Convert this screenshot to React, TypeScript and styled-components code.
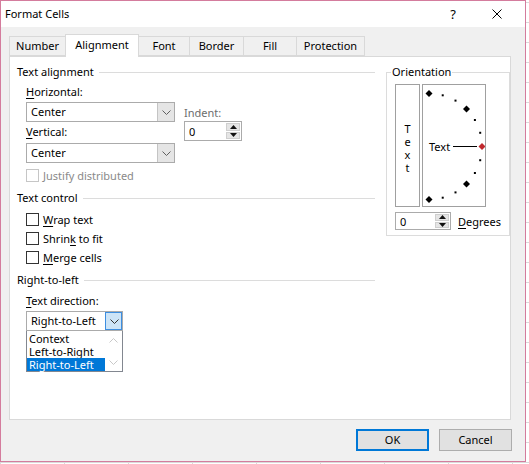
import React from "react";
import styled, { createGlobalStyle } from "styled-components";

const Global = createGlobalStyle`
  html, body { margin: 0; padding: 0; }
  body {
    width: 529px;
    height: 464px;
    overflow: hidden;
    background-color: #ffffff;
    background-image:
      linear-gradient(#dadada 1px, transparent 1px),
      linear-gradient(90deg, #dadada 1px, transparent 1px);
    background-size: 64px 20px;
    background-position: 0 2px, 0 0;
    font-family: "Noto Sans", "Open Sans", sans-serif;
    font-size: 11px;
    color: #000;
  }
  * { box-sizing: border-box; }
`;

const Dialog = styled.div`
  width: 526px;
  height: 462px;
  border: 1px solid #d47c9d;
  background: #f0f0f0;
  display: flex;
  flex-direction: column;
`;

const TitleBar = styled.div`
  height: 26px;
  background: #ffffff;
  display: flex;
  align-items: center;
  padding-left: 4px;
  padding-right: 6px;
`;

const Title = styled.div`
  flex: 1;
  font-size: 11px;
  line-height: 16px;
`;

const TitleButton = styled.div`
  width: 44px;
  height: 26px;
  display: flex;
  align-items: center;
  justify-content: center;
  font-size: 13px;
`;

const TabRow = styled.div`
  margin-top: 7px;
  height: 22px;
  display: flex;
  align-items: flex-end;
  padding-left: 9px;
  position: relative;
  z-index: 1;
`;

const Tab = styled.div<{ $w: number; $active?: boolean }>`
  width: ${(p) => p.$w}px;
  height: ${(p) => (p.$active ? 23 : 20)}px;
  margin-left: -1px;
  margin-bottom: ${(p) => (p.$active ? -1 : 0)}px;
  border: 1px solid #d9d9d9;
  border-bottom: ${(p) => (p.$active ? "none" : "1px solid #d9d9d9")};
  background: ${(p) => (p.$active ? "#ffffff" : "#f0f0f0")};
  display: flex;
  align-items: center;
  justify-content: center;
  padding-bottom: ${(p) => (p.$active ? 3 : 0)}px;
  line-height: 16px;
  position: relative;
  z-index: ${(p) => (p.$active ? 2 : 1)};
`;

const Panel = styled.div`
  margin-left: 8px;
  width: 502px;
  height: 364px;
  background: #ffffff;
  border: 1px solid #d9d9d9;
  padding: 7px 0 0 7px;
  display: flex;
  gap: 11px;
`;

const LeftCol = styled.div`
  width: 361px;
  display: flex;
  flex-direction: column;
`;

const GroupHeader = styled.div<{ $mt?: number }>`
  display: flex;
  align-items: center;
  gap: 5px;
  height: 16px;
  line-height: 16px;
  margin-top: ${(p) => p.$mt ?? 0}px;
  &::after {
    content: "";
    flex: 1;
    border-top: 1px solid #dcdcdc;
  }
`;

const Indented = styled.div`
  padding-left: 9px;
  display: flex;
  flex-direction: column;
`;

const AlignRow = styled.div`
  display: flex;
  gap: 9px;
`;

const Stack = styled.div<{ $pt?: number }>`
  display: flex;
  flex-direction: column;
  padding-top: ${(p) => p.$pt ?? 0}px;
`;

const Label = styled.div<{ $mt?: number; $disabled?: boolean }>`
  height: 16px;
  line-height: 16px;
  margin-top: ${(p) => p.$mt ?? 0}px;
  color: ${(p) => (p.$disabled ? "#6d6d6d" : "#000")};
  white-space: nowrap;
`;

const Key = styled.span`
  text-decoration: underline;
  text-underline-offset: 2px;
`;

const Combo = styled.div<{ $w: number; $mt?: number }>`
  width: ${(p) => p.$w}px;
  height: 20px;
  margin-top: ${(p) => p.$mt ?? 0}px;
  border: 1px solid #ababab;
  background: #ffffff;
  display: flex;
`;

const ComboValue = styled.div`
  flex: 1;
  padding-left: 4px;
  line-height: 18px;
  white-space: nowrap;
`;

const ComboButton = styled.div<{ $active?: boolean }>`
  width: 17px;
  background: ${(p) => (p.$active ? "#cce4f7" : "#e5e5e5")};
  border-left: 1px solid ${(p) => (p.$active ? "#3d8ee0" : "#c4c4c4")};
  ${(p) => (p.$active ? "outline: 1px solid #3d8ee0; outline-offset: -1px;" : "")}
  display: flex;
  align-items: center;
  justify-content: center;
`;

const Spinner = styled.div<{ $w: number; $h: number }>`
  width: ${(p) => p.$w}px;
  height: ${(p) => p.$h}px;
  border: 1px solid #ababab;
  background: #fff;
  display: flex;
`;

const SpinValue = styled.div`
  flex: 1;
  padding-left: 4px;
  display: flex;
  align-items: center;
`;

const SpinButtons = styled.div`
  width: 16px;
  padding: 1px;
  display: flex;
  flex-direction: column;
  gap: 1px;
`;

const SpinHalf = styled.div`
  flex: 1;
  background: #e5e5e5;
  border: 1px solid #cfcfcf;
  display: flex;
  align-items: center;
  justify-content: center;
`;

const CheckRow = styled.div<{ $mt?: number; $disabled?: boolean }>`
  display: flex;
  align-items: center;
  gap: 4px;
  height: 16px;
  margin-top: ${(p) => p.$mt ?? 0}px;
  color: ${(p) => (p.$disabled ? "#8a8a8a" : "#000")};
`;

const CheckBox = styled.div<{ $disabled?: boolean }>`
  width: 13px;
  height: 13px;
  border: 1px solid ${(p) => (p.$disabled ? "#c6c6c6" : "#333333")};
  background: #fff;
`;

const DropList = styled.div`
  width: 97px;
  height: 41px;
  border: 1px solid #828790;
  border-top: none;
  background: #fff;
  display: flex;
`;

const DropItems = styled.div`
  flex: 1;
  display: flex;
  flex-direction: column;
  padding-top: 1px;
`;

const DropItem = styled.div<{ $selected?: boolean }>`
  height: 13px;
  line-height: 13px;
  padding-left: 2px;
  white-space: nowrap;
  background: ${(p) => (p.$selected ? "#0078d7" : "transparent")};
  color: ${(p) => (p.$selected ? "#fff" : "#000")};
`;

const DropScroll = styled.div`
  width: 17px;
  display: flex;
  flex-direction: column;
  align-items: center;
  justify-content: space-between;
  padding: 7px 0 6px;
`;

const OrientSet = styled.fieldset`
  margin: 0;
  width: 111px;
  height: 172px;
  border: 1px solid #dcdcdc;
  padding: 4px 8px 0 8px;
  display: flex;
  flex-direction: column;
`;

const Legend = styled.legend`
  margin-left: -4px;
  padding: 0 1px;
  line-height: 16px;
  font-size: 11px;
`;

const OrientBoxes = styled.div`
  display: flex;
  gap: 2px;
`;

const VerticalBox = styled.div`
  width: 25px;
  height: 123px;
  border: 1px solid #a0a0a0;
  display: flex;
  flex-direction: column;
  align-items: center;
  justify-content: center;
  padding-top: 4px;
`;

const VLetter = styled.span`
  line-height: 13px;
  height: 13px;
`;

const DialBox = styled.div`
  width: 64px;
  height: 123px;
  border: 1px solid #a0a0a0;
`;

const DegreeRow = styled.div`
  margin-top: 5px;
  display: flex;
  align-items: center;
  gap: 7px;
`;

const Footer = styled.div`
  margin-top: 9px;
  display: flex;
  justify-content: flex-end;
  gap: 10px;
  padding-right: 13px;
`;

const Button = styled.div<{ $primary?: boolean }>`
  width: 73px;
  height: 22px;
  background: #e1e1e1;
  border: ${(p) => (p.$primary ? "2px solid #0078d7" : "1px solid #adadad")};
  display: flex;
  align-items: center;
  justify-content: center;
  line-height: 16px;
`;

const Chevron = ({ color = "#606060" }: { color?: string }) => (
  <svg width="9" height="5" viewBox="0 0 9 5">
    <path d="M0.5 0.5 L4.5 4.5 L8.5 0.5" fill="none" stroke={color} strokeWidth="1" />
  </svg>
);

const ChevronUp = ({ color = "#c8c8c8" }: { color?: string }) => (
  <svg width="9" height="5" viewBox="0 0 9 5">
    <path d="M0.5 4.5 L4.5 0.5 L8.5 4.5" fill="none" stroke={color} strokeWidth="1" />
  </svg>
);

const Tri = ({ up }: { up?: boolean }) => (
  <svg width="7" height="4" viewBox="0 0 7 4">
    <path d={up ? "M3.5 0 L7 4 L0 4 Z" : "M0 0 L7 0 L3.5 4 Z"} fill="#111" />
  </svg>
);

const SpinControl = ({ w, h }: { w: number; h: number }) => (
  <Spinner $w={w} $h={h}>
    <SpinValue>0</SpinValue>
    <SpinButtons>
      <SpinHalf>
        <Tri up />
      </SpinHalf>
      <SpinHalf>
        <Tri />
      </SpinHalf>
    </SpinButtons>
  </Spinner>
);

const Dial = () => {
  const cx = 6;
  const cy = 61.5;
  const r = 53;
  const marks: React.ReactNode[] = [];
  for (let a = -90; a <= 90; a += 15) {
    const rad = (a * Math.PI) / 180;
    const x = cx + r * Math.cos(rad);
    const y = cy - r * Math.sin(rad);
    if (a % 45 === 0) {
      const s = 3.5;
      marks.push(
        <path
          key={a}
          d={`M${x} ${y - s} L${x + s} ${y} L${x} ${y + s} L${x - s} ${y} Z`}
          fill={a === 0 ? "#c0282d" : "#000"}
        />
      );
    } else {
      marks.push(<rect key={a} x={x - 1} y={y - 1} width="2" height="2" fill="#000" />);
    }
  }
  return (
    <svg width="62" height="121" viewBox="0 0 62 121">
      {marks}
      <text x="6" y="65.5" fontFamily="Noto Sans, sans-serif" fontSize="11" fill="#000">
        Text
      </text>
      <line x1="30" y1="61.5" x2="54" y2="61.5" stroke="#000" strokeWidth="1" />
    </svg>
  );
};

export default function App() {
  return (
    <>
      <Global />
      <Dialog>
        <TitleBar>
          <Title>Format Cells</Title>
          <TitleButton>?</TitleButton>
          <TitleButton>
            <svg width="10" height="10" viewBox="0 0 10 10">
              <path d="M0.5 0.5 L9.5 9.5 M9.5 0.5 L0.5 9.5" stroke="#000" strokeWidth="1" />
            </svg>
          </TitleButton>
        </TitleBar>

        <TabRow>
          <Tab $w={57}>Number</Tab>
          <Tab $w={74} $active>
            Alignment
          </Tab>
          <Tab $w={52}>Font</Tab>
          <Tab $w={55}>Border</Tab>
          <Tab $w={54}>Fill</Tab>
          <Tab $w={69}>Protection</Tab>
        </TabRow>

        <Panel>
          <LeftCol>
            <GroupHeader>Text alignment</GroupHeader>
            <Indented>
              <AlignRow>
                <Stack>
                  <Label $mt={4}>
                    <Key>H</Key>orizontal:
                  </Label>
                  <Combo $w={149} $mt={2}>
                    <ComboValue>Center</ComboValue>
                    <ComboButton>
                      <Chevron />
                    </ComboButton>
                  </Combo>
                  <Label $mt={2}>
                    <Key>V</Key>ertical:
                  </Label>
                  <Combo $w={149} $mt={3}>
                    <ComboValue>Center</ComboValue>
                    <ComboButton>
                      <Chevron />
                    </ComboButton>
                  </Combo>
                </Stack>
                <Stack $pt={25}>
                  <Label $disabled>Indent:</Label>
                  <SpinControl w={58} h={20} />
                </Stack>
              </AlignRow>
              <CheckRow $mt={4} $disabled>
                <CheckBox $disabled />
                Justify distributed
              </CheckRow>
            </Indented>

            <GroupHeader $mt={7}>Text control</GroupHeader>
            <Indented>
              <CheckRow $mt={5}>
                <CheckBox />
                <span>
                  <Key>W</Key>rap text
                </span>
              </CheckRow>
              <CheckRow $mt={3}>
                <CheckBox />
                <span>
                  Shrin<Key>k</Key> to fit
                </span>
              </CheckRow>
              <CheckRow $mt={3}>
                <CheckBox />
                <span>
                  <Key>M</Key>erge cells
                </span>
              </CheckRow>
            </Indented>

            <GroupHeader $mt={7}>Right-to-left</GroupHeader>
            <Indented>
              <Label $mt={5}>
                <Key>T</Key>ext direction:
              </Label>
              <Combo $w={97} $mt={2}>
                <ComboValue>Right-to-Left</ComboValue>
                <ComboButton $active>
                  <Chevron color="#333" />
                </ComboButton>
              </Combo>
              <DropList>
                <DropItems>
                  <DropItem>Context</DropItem>
                  <DropItem>Left-to-Right</DropItem>
                  <DropItem $selected>Right-to-Left</DropItem>
                </DropItems>
                <DropScroll>
                  <ChevronUp />
                  <Chevron color="#c8c8c8" />
                </DropScroll>
              </DropList>
            </Indented>
          </LeftCol>

          <OrientSet>
            <Legend>Orientation</Legend>
            <OrientBoxes>
              <VerticalBox>
                <VLetter>T</VLetter>
                <VLetter>e</VLetter>
                <VLetter>x</VLetter>
                <VLetter>t</VLetter>
              </VerticalBox>
              <DialBox>
                <Dial />
              </DialBox>
            </OrientBoxes>
            <DegreeRow>
              <SpinControl w={56} h={18} />
              <span>
                <Key>D</Key>egrees
              </span>
            </DegreeRow>
          </OrientSet>
        </Panel>

        <Footer>
          <Button $primary>OK</Button>
          <Button>Cancel</Button>
        </Footer>
      </Dialog>
    </>
  );
}
